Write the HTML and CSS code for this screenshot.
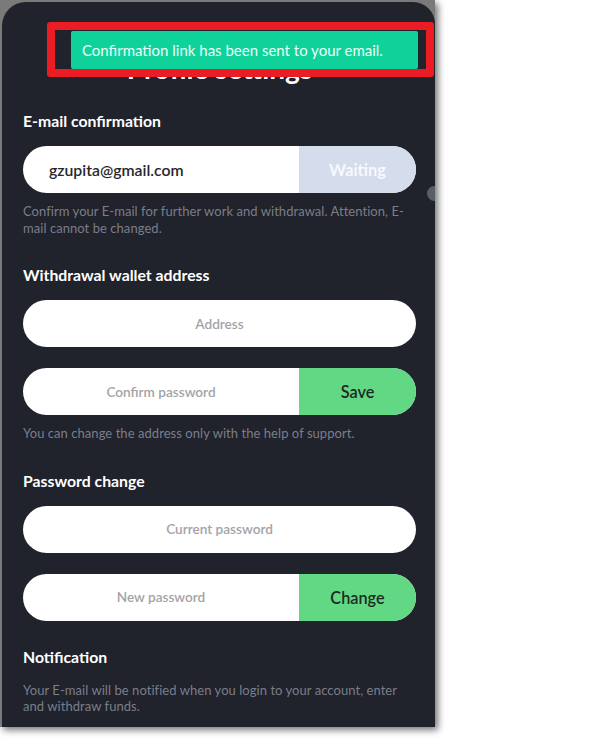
FILE: index.html
```html
<!DOCTYPE html>
<html lang="en">
<head>
<meta charset="utf-8">
<title>Profile settings</title>
<link rel="stylesheet" href="styles.css">
</head>
<body>
<div class="shot">
  <div class="panel">
    <span class="scroll-dot"></span>
    <h1 class="title">Profile settings</h1>

    <section class="section">
      <h2 class="heading">E-mail confirmation</h2>
      <div class="field">
        <div class="field-input field-input--value">gzupita@gmail.com</div>
        <div class="field-btn field-btn--waiting">Waiting</div>
      </div>
      <p class="hint">Confirm your E-mail for further work and withdrawal. Attention, E-mail cannot be changed.</p>
    </section>

    <section class="section">
      <h2 class="heading">Withdrawal wallet address</h2>
      <div class="field">
        <div class="field-input field-input--placeholder">Address</div>
      </div>
      <div class="field field--second">
        <div class="field-input field-input--placeholder">Confirm password</div>
        <div class="field-btn field-btn--green">Save</div>
      </div>
      <p class="hint">You can change the address only with the help of support.</p>
    </section>

    <section class="section">
      <h2 class="heading">Password change</h2>
      <div class="field">
        <div class="field-input field-input--placeholder">Current password</div>
      </div>
      <div class="field field--second">
        <div class="field-input field-input--placeholder">New password</div>
        <div class="field-btn field-btn--green">Change</div>
      </div>
    </section>

    <section class="section section--last">
      <h2 class="heading">Notification</h2>
      <p class="hint hint--notify">Your E-mail will be notified when you login to your account, enter and withdraw funds.</p>
    </section>

    <div class="toast-mark">
      <div class="toast">Confirmation link has been sent to your email.</div>
    </div>
  </div>
</div>
</body>
</html>
```

FILE: styles.css
```css
* { box-sizing: border-box; }

html, body {
  margin: 0;
  padding: 0;
  background: #ffffff;
}

body {
  font-family: "Lato", "Noto Sans", sans-serif;
  width: 600px;
  height: 739px;
  overflow: hidden;
}

.shot {
  width: 435px;
  height: 727px;
  background: #7a7a7a;
  padding: 2px 0 0 2px;
  box-shadow: 3px 3px 7px rgba(0, 0, 0, 0.55);
}

.panel {
  position: relative;
  height: 100%;
  background: #20222c;
  border-radius: 24px 22px 0 0;
  padding: 49px 19px 0 21px;
  overflow: hidden;
}

.scroll-dot {
  position: absolute;
  right: -7px;
  top: 184px;
  width: 15px;
  height: 15px;
  border-radius: 50%;
  background: #5a5e69;
}

.title {
  margin: 0;
  text-align: center;
  color: #ffffff;
  font-size: 28px;
  font-weight: 700;
  line-height: 34px;
}

.section {
  margin-top: 26px;
}

.section + .section {
  margin-top: 29px;
}

.section--last {
  margin-top: 26px !important;
}

.heading {
  margin: 0;
  color: #ffffff;
  font-size: 15.8px;
  font-weight: 700;
  line-height: 20px;
}

.field {
  display: flex;
  height: 47px;
  margin-top: 15px;
  border-radius: 24px;
  overflow: hidden;
  background: #ffffff;
}

.field--second {
  margin-top: 21px;
}

.field-input {
  flex: 1;
  display: flex;
  align-items: center;
}

.field-input--value {
  padding-left: 26px;
  color: #26272b;
  font-size: 15.8px;
  font-weight: 600;
}

.field-input--placeholder {
  justify-content: center;
  color: #a3a3a6;
  font-size: 13.6px;
  font-weight: 600;
}

.field-btn {
  width: 117px;
  display: flex;
  align-items: center;
  justify-content: center;
  font-size: 16.3px;
  font-weight: 600;
}

.field-btn--waiting {
  background: #d5dcec;
  color: #f7f9fc;
  font-weight: 700;
}

.field-btn--green {
  background: #62d884;
  color: #1d2a23;
}

.hint {
  margin: 10px 0 0;
  color: #7b7e89;
  font-size: 13px;
  letter-spacing: 0.05px;
  line-height: 16.5px;
}

.hint--notify {
  margin-top: 15px;
}

.toast-mark {
  position: absolute;
  left: 45px;
  top: 20px;
  width: 387px;
  height: 55px;
  border: 8px solid #ec1c24;
  border-radius: 3px;
}

.toast {
  position: absolute;
  left: 16px;
  top: 1px;
  width: 347px;
  height: 38px;
  background: #0fd29b;
  border-radius: 2px;
  color: #eafff7;
  font-size: 15px;
  line-height: 38px;
  padding-left: 11px;
}
```
